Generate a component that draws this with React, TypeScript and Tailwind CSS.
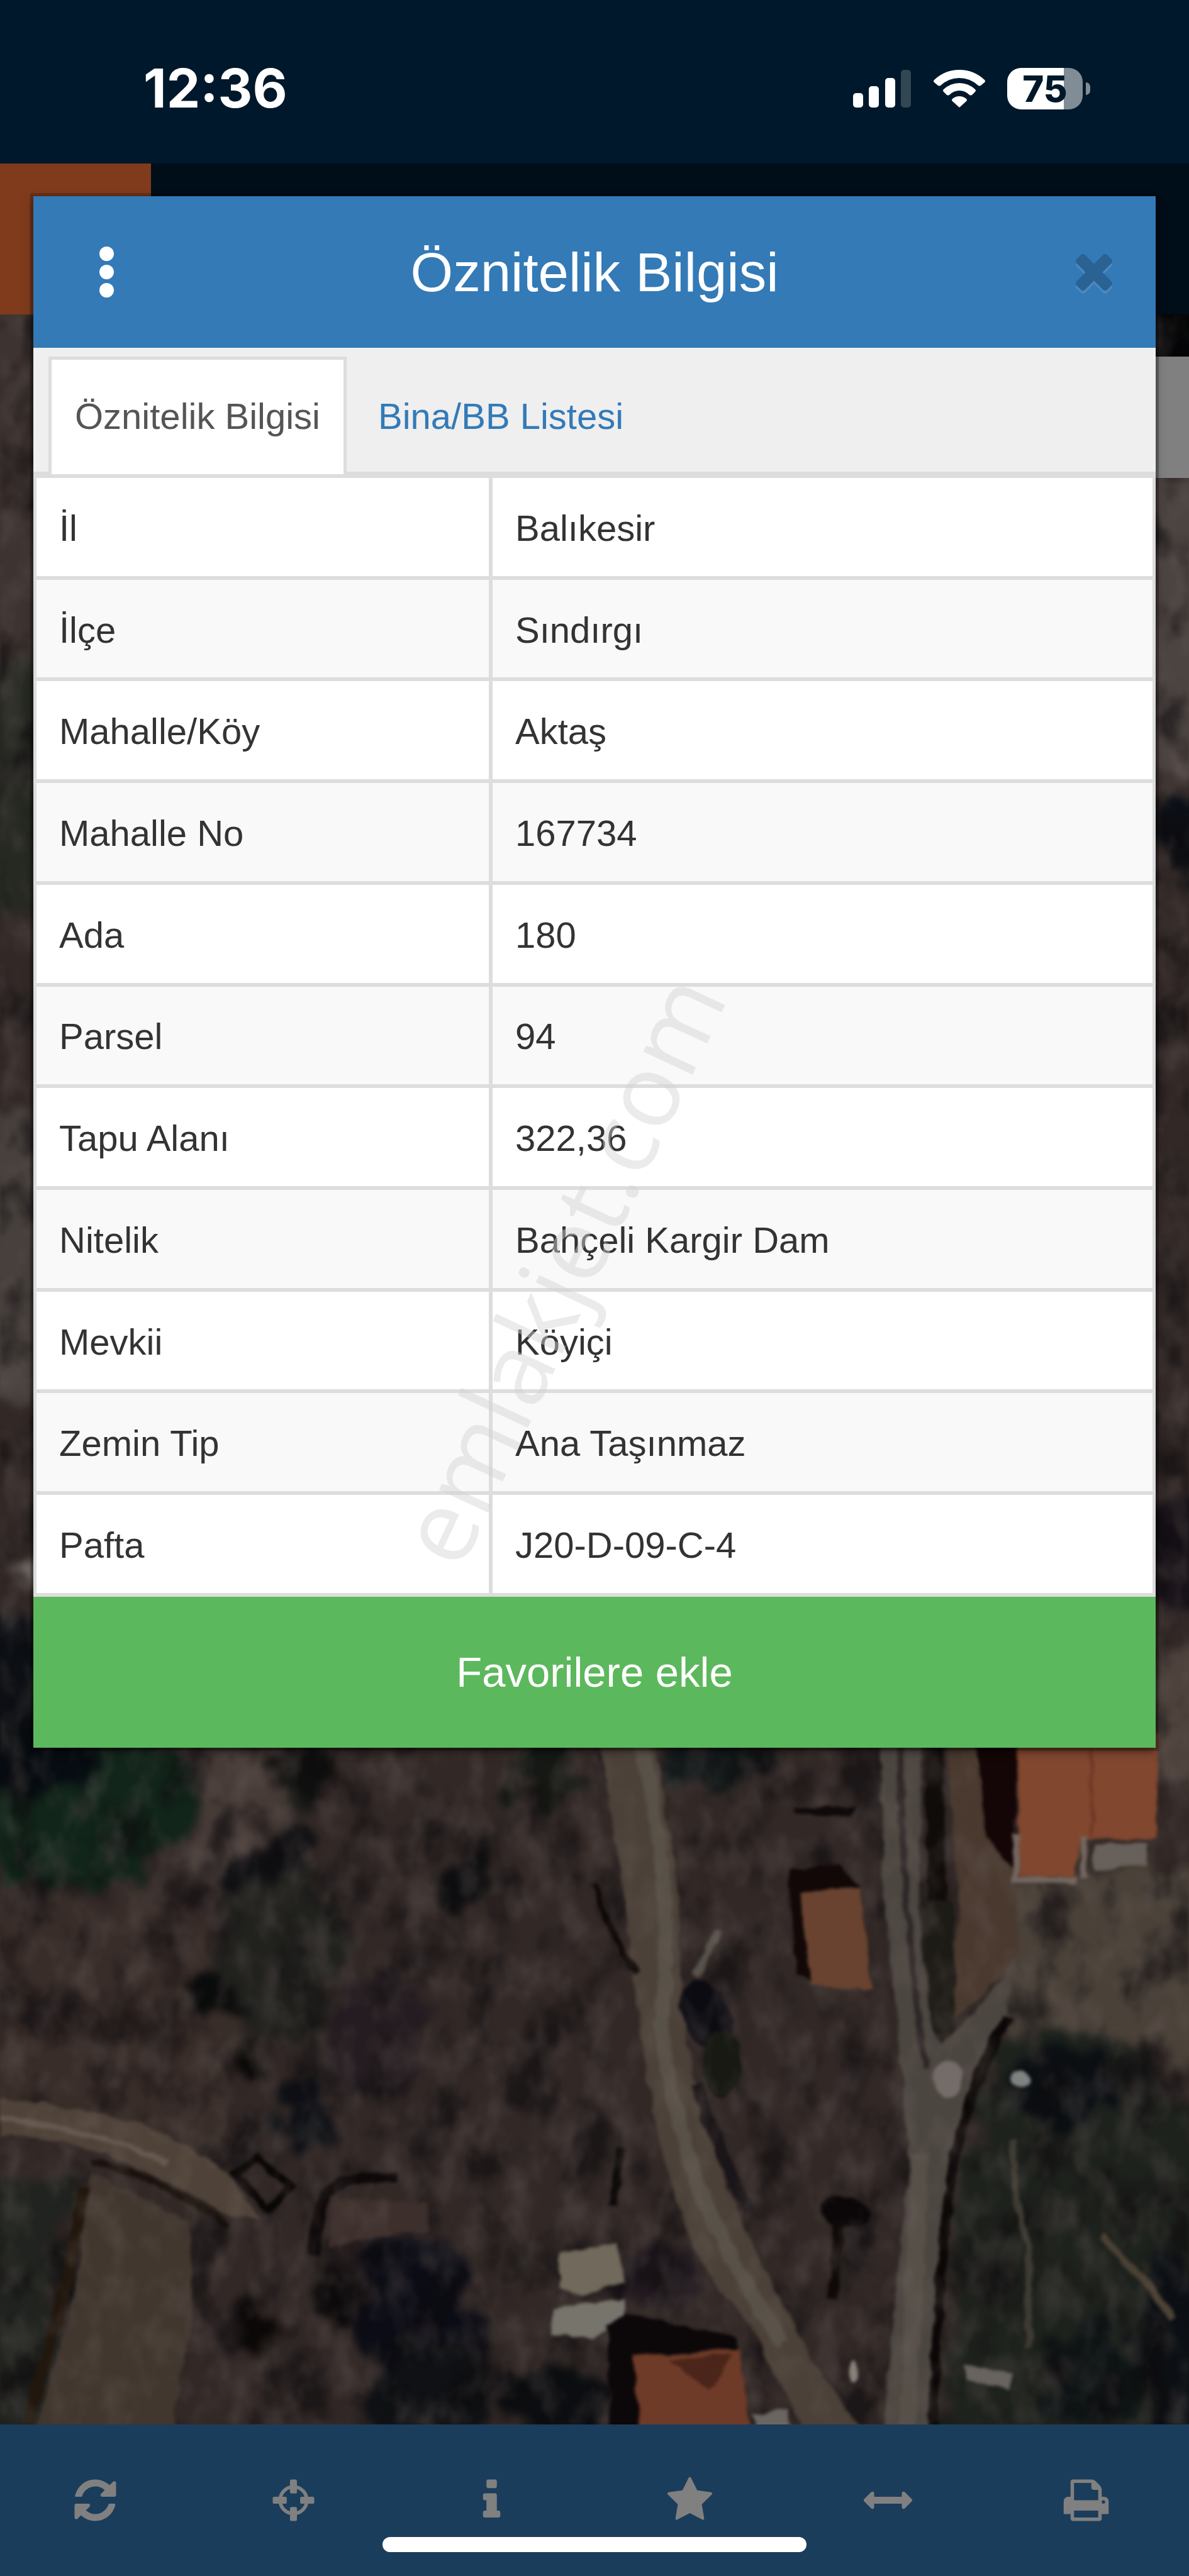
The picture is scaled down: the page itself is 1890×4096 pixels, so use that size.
import React from "react";

const rows = [
  { label: "İl", value: "Balıkesir" },
  { label: "İlçe", value: "Sındırgı" },
  { label: "Mahalle/Köy", value: "Aktaş" },
  { label: "Mahalle No", value: "167734" },
  { label: "Ada", value: "180" },
  { label: "Parsel", value: "94" },
  { label: "Tapu Alanı", value: "322,36" },
  { label: "Nitelik", value: "Bahçeli Kargir Dam" },
  { label: "Mevkii", value: "Köyiçi" },
  { label: "Zemin Tip", value: "Ana Taşınmaz" },
  { label: "Pafta", value: "J20-D-09-C-4" },
];

const tools = [
  {
    name: "Yenile",
    icon: (
      <path d="M1639 1056q0 5-1 7-64 268-268 434.500t-478 166.500q-146 0-282.500-55t-243.500-157l-129 129q-19 19-45 19t-45-19-19-45v-448q0-26 19-45t45-19h448q26 0 45 19t19 45-19 45l-137 137q71 66 161 102t187 36q134 0 250-65t186-179q11-17 53-117 8-23 30-23h192q13 0 22.500 9.500t9.500 22.500zm25-800v448q0 26-19 45t-45 19h-448q-26 0-45-19t-19-45 19-45l138-138q-148-137-349-137-134 0-250 65t-186 179q-11 17-53 117-8 23-30 23h-199q-13 0-22.500-9.500t-9.500-22.500v-7q65-268 270-434.500t480-166.500q146 0 284 55.500t245 156.500l130-129q19-19 45-19t45 19 19 45z" />
    ),
  },
  {
    name: "Konum",
    icon: (
      <>
        <circle cx="896" cy="896" r="495" fill="none" stroke="currentColor" strokeWidth="130" />
        <rect x="768" y="128" width="256" height="520" rx="60" />
        <rect x="768" y="1144" width="256" height="520" rx="60" />
        <rect x="128" y="768" width="520" height="256" rx="60" />
        <rect x="1144" y="768" width="520" height="256" rx="60" />
      </>
    ),
  },
  {
    name: "Bilgi",
    icon: (
      <path d="M1216 1344v128q0 26-19 45t-45 19h-512q-26 0-45-19t-19-45v-128q0-26 19-45t45-19h64v-384h-64q-26 0-45-19t-19-45v-128q0-26 19-45t45-19h384q26 0 45 19t19 45v576h64q26 0 45 19t19 45zm-128-1152v192q0 26-19 45t-45 19h-256q-26 0-45-19t-19-45v-192q0-26 19-45t45-19h256q26 0 45 19t19 45z" />
    ),
  },
  {
    name: "Favoriler",
    icon: (
      <path d="M1728 647q0 22-26 48l-363 354 86 500q1 7 1 20 0 21-10.500 35.500t-30.500 14.500q-19 0-40-12l-449-236-449 236q-22 12-40 12-21 0-31.500-14.500t-10.500-35.500q0-6 2-20l86-500-364-354q-25-27-25-48 0-37 56-46l502-73 225-455q19-41 49-41t49 41l225 455 502 73q56 9 56 46z" />
    ),
  },
  {
    name: "Ölçüm",
    icon: (
      <path d="M1792 896q0 26-19 45l-256 256q-19 19-45 19t-45-19-19-45v-128h-1024v128q0 26-19 45t-45 19-45-19l-256-256q-19-19-19-45t19-45l256-256q19-19 45-19t45 19 19 45v128h1024v-128q0-26 19-45t45-19 45 19l256 256q19 19 19 45z" />
    ),
  },
  {
    name: "Yazdır",
    icon: (
      <path
        fillRule="evenodd"
        d="M320 224q0-96 96-96h672q40 0 88 20t76 48l152 152q28 28 48 76t20 88v256h64q192 0 192 192v416q0 32-32 32h-224v160q0 96-96 96h-960q-96 0-96-96v-160h-224q-32 0-32-32v-416q0-192 192-192h64zM448 256v640h896v-384h-160q-96 0-96-96v-160zM448 1280v256h896v-256zM1536 896a64 64 0 1 0 0 128a64 64 0 1 0 0-128z"
      />
    ),
  },
];

const Terrain = () => (
  <svg
    className="absolute inset-0 h-full w-full"
    viewBox="0 562 2126 3775"
    preserveAspectRatio="none"
    aria-hidden="true"
  >
    <defs>
      <filter id="rough" x="-5%" y="-5%" width="110%" height="110%" colorInterpolationFilters="sRGB">
        <feTurbulence type="fractalNoise" baseFrequency="0.014" numOctaves="4" seed="4" />
        <feDisplacementMap in="SourceGraphic" scale="110" xChannelSelector="R" yChannelSelector="G" />
        <feGaussianBlur stdDeviation="8" />
      </filter>
      <filter id="edge" x="-5%" y="-5%" width="110%" height="110%" colorInterpolationFilters="sRGB">
        <feTurbulence type="fractalNoise" baseFrequency="0.03" numOctaves="2" seed="9" />
        <feDisplacementMap in="SourceGraphic" scale="14" xChannelSelector="R" yChannelSelector="G" />
        <feGaussianBlur stdDeviation="3" />
      </filter>
      <filter id="dark" x="0" y="0" width="100%" height="100%" colorInterpolationFilters="sRGB">
        <feTurbulence type="fractalNoise" baseFrequency="0.012 0.009" numOctaves="5" seed="12" />
        <feColorMatrix values="0 0 0 0 0.05  0 0 0 0 0.04  0 0 0 0 0.05  3.6 0 0 0 -1.7" />
        <feGaussianBlur stdDeviation="3" />
      </filter>
      <filter id="light" x="0" y="0" width="100%" height="100%" colorInterpolationFilters="sRGB">
        <feTurbulence type="fractalNoise" baseFrequency="0.022 0.014" numOctaves="5" seed="31" />
        <feColorMatrix values="0 0 0 0 0.45  0 0 0 0 0.4  0 0 0 0 0.38  0 2.2 0 0 -0.95" />
        <feGaussianBlur stdDeviation="3" />
      </filter>
    </defs>

    <rect x="0" y="562" width="2126" height="3775" fill="#322927" />

    {/* ground cover */}
    <g filter="url(#rough)">
      <rect x="-60" y="500" width="150" height="700" fill="#3d3330" />
      <rect x="-60" y="1210" width="150" height="420" fill="#262922" />
      <rect x="-60" y="1980" width="150" height="520" fill="#47403c" />
      <ellipse cx="55" cy="2820" rx="45" ry="25" fill="#77706c" />
      <rect x="-60" y="2890" width="150" height="250" fill="#0c1015" />
      <rect x="2050" y="850" width="150" height="520" fill="#4c4441" />
      <rect x="2070" y="1440" width="120" height="130" fill="#0c1016" />
      <rect x="2050" y="2680" width="150" height="180" fill="#151016" />
      <rect x="2050" y="2950" width="150" height="250" fill="#4d423c" />
      <polygon points="-60,3400 330,3400 430,3560 400,3860 -60,3760" fill="#382d29" />
      <ellipse cx="490" cy="3490" rx="120" ry="160" fill="#21211e" />
      <ellipse cx="130" cy="3230" rx="215" ry="145" fill="#11251a" />
      <ellipse cx="60" cy="3150" rx="120" ry="60" fill="#060c11" />
      <polygon points="335,3060 505,3060 525,3268 447,3299 349,3377 355,3237" fill="#463b37" />
      <ellipse cx="475" cy="3325" rx="100" ry="40" transform="rotate(-20 475 3325)" fill="#0f0f12" />
      <ellipse cx="545" cy="3165" rx="50" ry="55" fill="#0f110f" />
      <ellipse cx="980" cy="3170" rx="70" ry="60" fill="#151814" />
      <ellipse cx="1290" cy="3160" rx="90" ry="50" fill="#13191a" />
      <circle cx="837" cy="3355" r="48" fill="#0e0e10" />
      <circle cx="385" cy="3575" r="36" fill="#0a0b0b" />
      <circle cx="461" cy="3690" r="30" fill="#0a0908" />
      <ellipse cx="545" cy="3780" rx="45" ry="60" fill="#0e1116" />
      <ellipse cx="680" cy="3650" rx="90" ry="110" fill="#241c20" />
      <polygon points="1770,3360 2200,3340 2200,3700 1780,3620" fill="#4a4139" />
      <polygon points="1800,3620 1960,3640 2200,3820 2200,4400 1690,4400 1720,3860" fill="#1e221d" />
      <ellipse cx="1908" cy="3745" rx="90" ry="65" fill="#0b1014" />
      <ellipse cx="1950" cy="4250" rx="90" ry="90" fill="#0e1415" />
      <ellipse cx="2100" cy="4190" rx="60" ry="160" fill="#0c1014" />
      <polygon points="-60,3900 140,3900 60,4400 -60,4400" fill="#20231f" />
      <ellipse cx="750" cy="4150" rx="110" ry="150" transform="rotate(-20 750 4150)" fill="#0b0c15" />
      <ellipse cx="780" cy="4280" rx="120" ry="80" fill="#0f1114" />
      <ellipse cx="1000" cy="4290" rx="80" ry="70" fill="#0b0d10" />
      <circle cx="455" cy="4160" r="38" fill="#0c0807" />
      <circle cx="595" cy="4110" r="38" fill="#0c0a0b" />
      <ellipse cx="1180" cy="4070" rx="70" ry="60" fill="#221a20" />
    </g>
    <rect x="2060" y="562" width="66" height="80" fill="#040506" />

    <rect x="0" y="562" width="2126" height="3775" filter="url(#dark)" opacity="0.6" />

    {/* roads and fields */}
    <g filter="url(#edge)">
      <path d="M0 3755Q110 3765 200 3785T400 3880L465 3970 400 3960Q290 3890 170 3850T0 3825z" fill="#4f4339" />
      <path d="M0 3790Q180 3810 300 3870" stroke="#655a50" strokeWidth="10" fill="none" />
      <path d="M163 3868Q290 3890 410 3985" stroke="#17100b" strokeWidth="12" fill="none" />
      <polygon points="163,3885 339,3976 345,4131 305,4360 61,4360 136,4092" fill="#41372f" />
      <path d="M150 3914L120 4080 45 4350" stroke="#21170d" strokeWidth="20" fill="none" />
      <path d="M563 4035Q565 3930 600 3910T710 3895" stroke="#0d0809" strokeWidth="20" fill="none" />
      <polygon points="590,3930 760,3940 770,3990 680,4000 590,4020" fill="#3d2f2b" />
      <path d="M420 3890l40-30 60 50-40 45z" stroke="#0b0707" strokeWidth="14" fill="none" />
      <path d="M1071 3100Q1110 3350 1132 3533L1159 3725Q1180 3850 1220 3966T1342 4158L1444 4360 1550 4360Q1460 4240 1397 4119T1302 3917L1241 3725 1216 3552Q1220 3420 1200 3292L1166 3100z" fill="#4b4138" />
      <path d="M1140 3100Q1190 3290 1190 3450T1180 3620Q1210 3830 1270 3960T1400 4190" stroke="#585148" strokeWidth="26" fill="none" />
      <path d="M1063 3370Q1090 3460 1140 3530" stroke="#0d0807" strokeWidth="10" fill="none" />
      <path d="M1245 3730Q1290 3860 1340 3960" stroke="#1a1518" strokeWidth="22" fill="none" />
      <path d="M1112 3840L1095 3945" stroke="#0d0a0a" strokeWidth="16" />
      <path d="M1690 3100L1749 3129 1817 3340 1817 3513 1700 3620 1715 3400z" fill="#49392f" />
      <path d="M1668 3100L1676 3400" stroke="#100c0a" strokeWidth="32" fill="none" />
      <path d="M1680 3400L1684 3640" stroke="#1d1b16" strokeWidth="50" fill="none" />
      <path d="M1573 3100L1648 3100 1644 3400 1664 3620 1681 3658 1776 3562 1817 3500 1797 3619Q1740 3740 1722 3802T1688 4014L1661 4360 1580 4360Q1600 4100 1627 3870Q1605 3600 1580 3400z" fill="#4c4641" />
      <path d="M1610 3100Q1610 3400 1655 3700" stroke="#2e2727" strokeWidth="12" fill="none" />
      <path d="M1645 3850Q1635 4100 1622 4340" stroke="#575049" strokeWidth="30" fill="none" />
      <path d="M1800 3610Q1720 3760 1700 3900T1668 4350" stroke="#0b0707" strokeWidth="18" fill="none" />
      <ellipse cx="1263" cy="3605" rx="42" ry="68" transform="rotate(-25 1263 3605)" fill="#0b0b11" />
      <ellipse cx="1290" cy="3690" rx="34" ry="60" fill="#171912" />
      <ellipse cx="1512" cy="3956" rx="46" ry="26" transform="rotate(15 1512 3956)" fill="#0b0708" />
      <path d="M1500 3970L1490 4110" stroke="#0f0a09" strokeWidth="18" />
      <path d="M1245 3535L1285 3450" stroke="#57524c" strokeWidth="12" />
      <ellipse cx="1695" cy="3718" rx="26" ry="32" fill="#736c68" />
      <ellipse cx="1824" cy="3720" rx="18" ry="14" fill="#7f8583" />
      <path d="M1810 3830Q1815 3960 1840 4020L1838 4200" stroke="#3f3b32" strokeWidth="12" fill="none" />
      <path d="M1970 4000Q2050 4080 2100 4150" stroke="#4a4133" strokeWidth="14" fill="none" />
    </g>

    <rect x="0" y="562" width="2126" height="3775" filter="url(#light)" opacity="0.32" />

    {/* buildings */}
    <g filter="url(#edge)">
      <polygon points="1745,3100 1820,3100 1812,3345 1763,3283" fill="#140506" />
      <polygon points="1817,3100 2072,3100 2068,3288 1932,3292 1919,3355 1824,3355" fill="#81472f" />
      <path d="M1952 3129V3285" stroke="#6c3522" strokeWidth="5" />
      <path d="M1817 3280V3362H1925M1938 3285V3360" stroke="#746760" strokeWidth="12" fill="none" />
      <polygon points="1955,3300 2055,3295 2050,3335 1955,3345" fill="#68605a" />
      <polygon points="1410,3345 1500,3335 1539,3379 1432,3386 1451,3545 1425,3530" fill="#110807" />
      <polygon points="1430,3384 1539,3379 1559,3560 1451,3552" fill="#6a4330" />
      <polygon points="1420,3235 1530,3230 1525,3248 1420,3245" fill="#0f0a0b" />
      <polygon points="1000,4030 1105,4015 1115,4080 1040,4110 1000,4090" fill="#71695b" />
      <polygon points="990,4130 1120,4110 1115,4150 1060,4180 985,4175" fill="#77746c" />
      <polygon points="1085,4160 1120,4140 1315,4180 1322,4201 1132,4216 1146,4350 1092,4350" fill="#0c0709" />
      <polygon points="1132,4216 1322,4201 1342,4350 1146,4350" fill="#6f3b29" />
      <polygon points="1195,4220 1308,4211 1268,4278" fill="#4b2519" />
      <polygon points="1345,4320 1410,4310 1415,4350 1350,4350" fill="#6b6562" />
      <polygon points="1722,4230 1812,4245 1805,4275 1725,4258" fill="#69635f" />
      <ellipse cx="1525" cy="4242" rx="8" ry="18" fill="#88817a" />
    </g>
  </svg>
);

const StatusBar = () => (
  <header className="flex h-[260px] items-center justify-between bg-[#00182b] pt-[22px] pr-[157px] pl-[228px] text-white">
    <time className="font-[Inter] text-[85px] font-bold">12:36</time>
    <div className="flex items-center">
      <svg className="mr-[36px] h-[60px] w-[92px]" viewBox="0 0 92 60" fill="#fff" aria-hidden="true">
        <rect x="0" y="37" width="16" height="23" rx="5" />
        <rect x="25" y="26" width="16" height="34" rx="5" />
        <rect x="51" y="13" width="16" height="47" rx="5" />
        <rect x="76" y="0" width="16" height="60" rx="5" fill="#334654" />
      </svg>
      <svg className="mr-[35px] h-[60px] w-[82px]" viewBox="0 0 82 60" fill="#fff" aria-hidden="true">
        <path d="M1 16Q-1 18 1 20L7 25Q9 26 11 25Q24 13 41 13T71 25Q73 26 75 25L81 20Q83 18 81 16Q64 0 41 0T1 16z" />
        <path d="M16 31Q14 33 16 35L21 40Q23 41 25 40Q32 33 41 33T57 40Q59 41 61 40L66 35Q68 33 66 31Q55 21 41 21T16 31z" />
        <path d="M30 46Q28 48 30 50L40 59Q41 60 42 59L52 50Q54 48 52 46Q47 42 41 42T30 46z" />
      </svg>
      <div className="flex h-[66px] w-[120px] items-center justify-center rounded-[22px] bg-[linear-gradient(90deg,#ffffff_75%,#818d96_75%)] font-[Inter] text-[58px] leading-none font-extrabold text-[#00182b]">
        75
      </div>
      <div className="ml-[5px] h-[20px] w-[7px] rounded-r-full bg-[#818d96]" />
    </div>
  </header>
);

const AttributeDialog = () => (
  <section
    role="dialog"
    aria-labelledby="dialog-title"
    className="absolute inset-x-[53px] top-[312px] bg-white shadow-[0_0_0_5px_rgba(0,0,0,0.2),0_6px_12px_rgba(0,0,0,0.5)]"
  >
    <div className="flex h-[241px] items-center justify-between bg-[#337ab7] pr-[69px] pl-[86px] text-white">
      <button aria-label="Menü" className="flex h-[81px] w-[60px] items-center justify-center">
        <svg className="h-[81px] w-[23px]" viewBox="0 0 23 81" fill="currentColor">
          <circle cx="11.500" cy="11.500" r="11.500" />
          <circle cx="11.500" cy="40.500" r="11.500" />
          <circle cx="11.500" cy="69.500" r="11.500" />
        </svg>
      </button>
      <h1 id="dialog-title" className="text-[87px] leading-none">
        Öznitelik Bilgisi
      </h1>
      <button
        aria-label="Kapat"
        className="flex w-[77px] justify-end text-[#296293] drop-shadow-[0_5px_0_#4a88be]"
      >
        <svg className="h-[58px] w-[58px]" viewBox="302 366 1188 1188" fill="currentColor">
          <path d="M1490 1322q0 40-28 68l-136 136q-28 28-68 28t-68-28l-294-294-294 294q-28 28-68 28t-68-28l-136-136q-28-28-28-68t28-68l294-294-294-294q-28-28-28-68t28-68l136-136q28-28 68-28t68 28l294 294 294-294q28-28 68-28t68 28l136 136q28 28 28 68t-28 68l-294 294 294 294q28 28 28 68z" />
        </svg>
      </button>
    </div>

    <nav className="flex h-[201px] gap-[8px] border-b-4 border-[#ddd] bg-[#efefef] pt-[14px] pl-[24px] text-[58px]">
      <button className="-mb-[4px] border-x-[5px] border-t-[5px] border-[#ddd] bg-white px-[37px] pb-1 text-[#555]">
        Öznitelik Bilgisi
      </button>
      <button className="-mb-[4px] border-x-[5px] border-t-[5px] border-transparent px-[37px] pb-1 text-[#337ab7]">
        Bina/BB Listesi
      </button>
    </nav>

    <table className="h-[1785px] w-full border-separate border-spacing-0 border-x-[5px] border-t-[6px] border-[#ddd] text-[58px] leading-none text-[#333]">
      <tbody>
        {rows.map((row) => (
          <tr key={row.label} className="bg-white even:bg-[#f9f9f9]">
            <th
              scope="row"
              className="w-[725px] border-r-[6px] border-b-[6px] border-[#ddd] px-[36px] pt-1 text-left font-normal"
            >
              {row.label}
            </th>
            <td className="border-b-[6px] border-[#ddd] px-[36px] pt-1">{row.value}</td>
          </tr>
        ))}
      </tbody>
    </table>

    <button className="block h-[240px] w-full bg-[#5cb85c] text-[67px] text-white">
      Favorilere ekle
    </button>
  </section>
);

const App = () => {
  return (
    <main className="relative flex min-h-screen flex-col overflow-hidden bg-[#302725] font-['Liberation_Sans',Arial,sans-serif]">
      <StatusBar />
      <div className="flex h-[240px] bg-[#000e19]">
        <div className="w-[240px] bg-[#7f3b1c]" />
      </div>

      <div className="relative flex-1">
        <Terrain />
        <div className="absolute top-[67px] right-0 h-[193px] w-[120px] bg-[#808080]" />
      </div>

      <footer className="relative h-[241px] bg-[#1b3d5c]">
        <div className="grid h-full grid-cols-6">
          {tools.map((tool) => (
            <button
              key={tool.name}
              aria-label={tool.name}
              className="flex items-center justify-center pr-[12px] text-[#808080]"
            >
              <svg className="h-[77px] w-[77px]" viewBox="0 0 1792 1792" fill="currentColor">
                {tool.icon}
              </svg>
            </button>
          ))}
        </div>
        <div className="absolute bottom-[38px] left-1/2 h-[24px] w-[674px] -translate-x-1/2 rounded-full bg-white" />
      </footer>

      <AttributeDialog />

      {/* watermark */}
      <svg
        className="pointer-events-none absolute inset-0 h-full w-full"
        viewBox="0 0 1890 4096"
      >
        <text
          x="945"
          y="2043"
          textAnchor="middle"
          transform="rotate(-65 945 2043)"
          className="fill-[#d3d3d3] font-['Open_Sans'] text-[161px] opacity-45"
        >
          emlakjet.com
        </text>
      </svg>
    </main>
  );
};

export default App;
